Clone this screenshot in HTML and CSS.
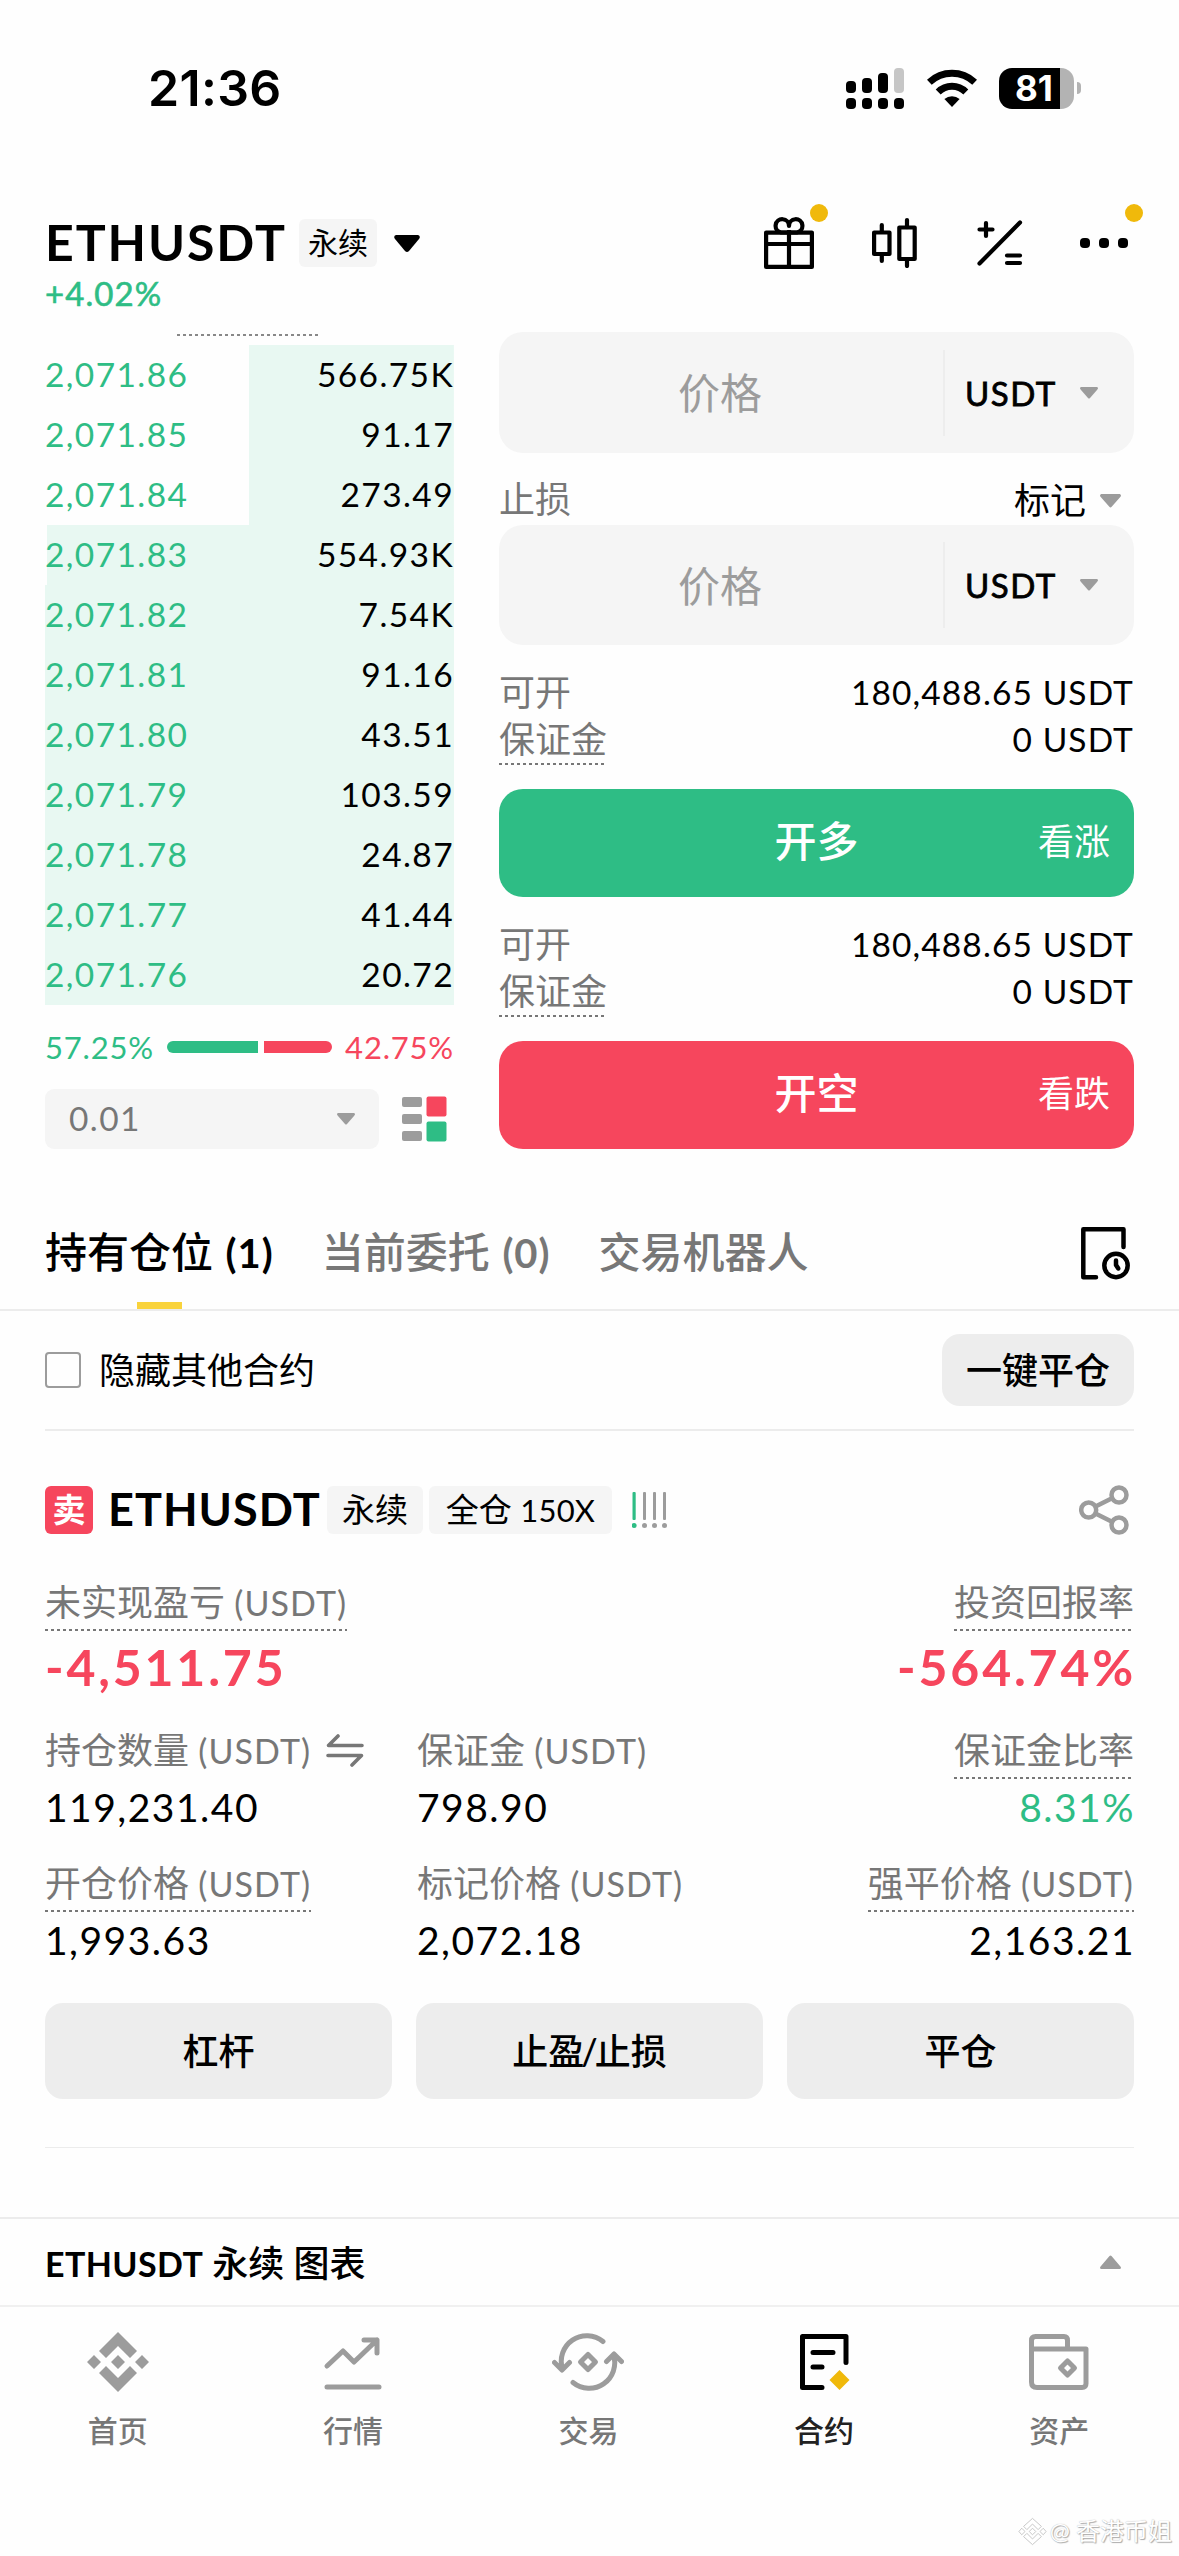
FILE: index.html
```html
<!DOCTYPE html>
<html lang="zh-CN">
<head>
<meta charset="utf-8">
<title>ETHUSDT 永续</title>
<link rel="stylesheet" href="styles.css">
</head>
<body>
<div class="status-bar">
  <span class="clock">21:36</span>
  <div class="status-icons">
    <svg class="signal" width="58" height="41" viewBox="0 0 58 41">
      <g fill="#000"><rect y="13" width="10" height="12" rx="4"/><rect x="16" y="10" width="10" height="15" rx="4"/><rect x="32" y="5" width="10" height="20" rx="4"/><rect y="30" width="10" height="11" rx="4"/><rect x="16" y="30" width="10" height="11" rx="4"/><rect x="32" y="30" width="10" height="11" rx="4"/><rect x="48" y="30" width="10" height="11" rx="4"/></g>
      <rect x="48" width="10" height="25" rx="4" fill="#c6c6c6"/>
    </svg>
    <svg class="wifi" width="50" height="38" viewBox="0 0 50 38">
      <path d="M25 38l-7.600-7.900a11.500 11.500 0 0 1 15.200 0z" fill="#000"/>
      <path d="M2.300 13.300a33 33 0 0 1 45.400 0M11.200 23a19.500 19.500 0 0 1 27.600 0" fill="none" stroke="#000" stroke-width="7"/>
    </svg>
    <div class="battery"><div class="battery-cell"><span>81</span></div><i class="battery-tip"></i></div>
  </div>
</div>

<header class="pair-header">
  <div class="pair-row">
    <h1>ETHUSDT</h1><span class="tag tag-sm">永续</span>
    <svg class="pair-caret" width="26" height="17" viewBox="0 0 26 17"><path d="M2 0H24Q27 1 25 4L15 16Q13 18 11 16L1 4Q-1 1 2 0z"/></svg>
    <div class="tools">
      <div class="tool tool-gift">
        <svg width="50" height="52" viewBox="0 0 50 52" fill="none" stroke="#000" stroke-width="4.200" stroke-linejoin="round"><rect x="2.100" y="15.600" width="45.800" height="34.300"/><path d="M2 27H48M25 13V50"/><path d="M25 15.500h-8a6.700 6.700 0 1 1 8-6.500a6.700 6.700 0 1 1 8 6.500h-8z"/></svg>
        <i class="dot"></i>
      </div>
      <svg class="tool-candle" width="45" height="50" viewBox="0 0 45 50" fill="none" stroke="#000" stroke-width="4.200" stroke-linecap="round" stroke-linejoin="round"><rect x="2.100" y="14.500" width="15.400" height="21.500"/><rect x="27.300" y="9.500" width="15.400" height="31.500"/><path d="M9.800 7v7M9.800 37v6M35 2.100v7M35 42v6"/></svg>
      <svg class="tool-calc" width="46" height="46" viewBox="0 0 46 46" fill="none" stroke="#000" stroke-width="4.200" stroke-linecap="round"><path d="M2.500 43.500L43 2.500M2.500 9.500H15.500M9 3V16M30 35.500H43M30 43H43"/></svg>
      <div class="tool tool-more">
        <svg width="48" height="10" viewBox="0 0 48 10"><rect width="10" height="10" rx="4"/><rect x="19" width="10" height="10" rx="4"/><rect x="38" width="10" height="10" rx="4"/></svg>
        <i class="dot"></i>
      </div>
    </div>
  </div>
  <div class="change">+4.02%</div>
</header>

<main>
<section class="trade">
  <div class="book">
    <div class="peek"></div>
    <div class="book-row" style="--depth:50.1%"><span>2,071.86</span><b>566.75K</b></div>
    <div class="book-row" style="--depth:50.1%"><span>2,071.85</span><b>91.17</b></div>
    <div class="book-row" style="--depth:50.1%"><span>2,071.84</span><b>273.49</b></div>
    <div class="book-row" style="--depth:99.5%"><span>2,071.83</span><b>554.93K</b></div>
    <div class="book-row" style="--depth:100%"><span>2,071.82</span><b>7.54K</b></div>
    <div class="book-row" style="--depth:100%"><span>2,071.81</span><b>91.16</b></div>
    <div class="book-row" style="--depth:100%"><span>2,071.80</span><b>43.51</b></div>
    <div class="book-row" style="--depth:100%"><span>2,071.79</span><b>103.59</b></div>
    <div class="book-row" style="--depth:100%"><span>2,071.78</span><b>24.87</b></div>
    <div class="book-row" style="--depth:100%"><span>2,071.77</span><b>41.44</b></div>
    <div class="book-row" style="--depth:100%"><span>2,071.76</span><b>20.72</b></div>
    <div class="ratio">
      <span class="up">57.25%</span>
      <i class="ratio-buy" style="flex-grow:57.25"></i><i class="ratio-sell" style="flex-grow:42.75"></i>
      <span class="down">42.75%</span>
    </div>
    <div class="book-foot">
      <div class="precision"><span>0.01</span><svg width="18" height="12" viewBox="0 0 18 12"><path class="caret" d="M1 0H17Q19 1 17 3L10 11Q9 12 8 11L1 3Q-1 1 1 0z"/></svg></div>
      <svg class="layout-icon" width="45" height="46" viewBox="0 0 45 46"><g fill="#9c9c9c"><rect y="1" width="20" height="10" rx="2"/><rect y="18" width="20" height="10" rx="2"/><rect y="35" width="20" height="10" rx="2"/></g><rect x="24.500" y=".5" width="20" height="20" rx="2" fill="#f6465d"/><rect x="24.500" y="25.500" width="20" height="20" rx="2" fill="#2ebd85"/></svg>
    </div>
  </div>

  <div class="order">
    <div class="field"><span class="placeholder">价格</span><div class="unit"><span>USDT</span><svg width="18" height="12" viewBox="0 0 18 12"><path class="caret" d="M1 0H17Q19 1 17 3L10 11Q9 12 8 11L1 3Q-1 1 1 0z"/></svg></div></div>
    <div class="stop-row"><span class="muted">止损</span><span class="trigger">标记<svg width="21" height="14" viewBox="0 0 18 12"><path class="caret" d="M1 0H17Q19 1 17 3L10 11Q9 12 8 11L1 3Q-1 1 1 0z"/></svg></span></div>
    <div class="field field-2"><span class="placeholder">价格</span><div class="unit"><span>USDT</span><svg width="18" height="12" viewBox="0 0 18 12"><path class="caret" d="M1 0H17Q19 1 17 3L10 11Q9 12 8 11L1 3Q-1 1 1 0z"/></svg></div></div>
    <div class="info info-a"><span class="muted">可开</span><span class="num">180,488.65 USDT</span></div>
    <div class="info info-b"><span class="muted dotted">保证金</span><span class="num">0 USDT</span></div>
    <button class="submit buy"><span>开多</span><em>看涨</em></button>
    <div class="info info-a"><span class="muted">可开</span><span class="num">180,488.65 USDT</span></div>
    <div class="info info-b"><span class="muted dotted">保证金</span><span class="num">0 USDT</span></div>
    <button class="submit sell"><span>开空</span><em>看跌</em></button>
  </div>
</section>

<nav class="tabs">
  <span class="tab active">持有仓位 <span class="latin">(1)</span></span>
  <span class="tab">当前委托 <span class="latin">(0)</span></span>
  <span class="tab">交易机器人</span>
  <svg class="history" width="50" height="53" viewBox="0 0 50 53" fill="none" stroke="#000" stroke-width="4.500" stroke-linecap="round" stroke-linejoin="round"><path d="M42.500 20V2.300H2.300V50.200H15"/><circle cx="35" cy="38.500" r="11.700"/><path d="M35 33.500v4.500l2.300 3.500"/></svg>
</nav>

<section class="filter">
  <i class="checkbox"></i><span class="filter-label">隐藏其他合约</span>
  <button class="close-all">一键平仓</button>
</section>

<section class="position">
  <div class="position-head">
    <span class="side">卖</span><h2>ETHUSDT</h2><span class="tag tag-type">永续</span><span class="tag tag-lev">全仓 <span class="latin">150X</span></span>
    <svg class="adl" width="36" height="37" viewBox="0 0 36 37"><g fill="#9c9c9c"><rect x="11" width="3" height="28" rx="1"/><rect x="21" width="3" height="28" rx="1"/><rect x="31" width="3" height="28" rx="1"/><circle cx="12.500" cy="33.500" r="2.500"/><circle cx="22.500" cy="33.500" r="2.500"/><circle cx="32.500" cy="33.500" r="2.500"/></g><g fill="#2ebd85"><rect x=".5" width="3.200" height="28" rx="1"/><circle cx="2.100" cy="33.500" r="2.500"/></g></svg>
    <svg class="share" width="50" height="50" viewBox="0 0 50 50" fill="none" stroke="#9c9c9c" stroke-width="4.500"><circle cx="9.700" cy="25" r="7.500"/><circle cx="40" cy="10" r="7.500"/><circle cx="40" cy="40" r="7.500"/><path d="M16.500 21.500L33 13.300M16.500 28.500L33 36.700"/></svg>
  </div>
  <div class="pnl">
    <div class="cell"><span class="label dotted">未实现盈亏 <span class="latin">(USDT)</span></span><strong>-4,511.75</strong></div>
    <div class="cell end"><span class="label dotted">投资回报率</span><strong>-564.74%</strong></div>
  </div>
  <div class="stats">
    <div class="cell"><span class="label">持仓数量 <span class="latin">(USDT)</span><svg class="swap" width="38" height="33" viewBox="0 0 38 33" fill="none" stroke="#777" stroke-width="3.600" stroke-linecap="round" stroke-linejoin="round"><path d="M36 11.500H2.500L12 2M2 21.500H35.500L26 31"/></svg></span><span class="value">119,231.40</span></div>
    <div class="cell"><span class="label">保证金 <span class="latin">(USDT)</span></span><span class="value">798.90</span></div>
    <div class="cell end"><span class="label dotted">保证金比率</span><span class="value up">8.31%</span></div>
  </div>
  <div class="stats">
    <div class="cell"><span class="label dotted">开仓价格 <span class="latin">(USDT)</span></span><span class="value">1,993.63</span></div>
    <div class="cell"><span class="label">标记价格 <span class="latin">(USDT)</span></span><span class="value">2,072.18</span></div>
    <div class="cell end"><span class="label dotted">强平价格 <span class="latin">(USDT)</span></span><span class="value">2,163.21</span></div>
  </div>
  <div class="actions"><button>杠杆</button><button>止盈<span class="slash">/</span>止损</button><button>平仓</button></div>
</section>
</main>

<div class="chart-bar"><span><span class="latin">ETHUSDT</span> 永续 图表</span><svg width="21" height="14" viewBox="0 0 21 14"><path class="caret" d="M1 14H20Q22 13 20 11L11.500 1Q10.500 0 9.500 1L1 11Q-1 13 1 14z"/></svg></div>

<footer class="bottom-nav">
  <a><svg width="62" height="60" viewBox="0 0 62 60" fill="#9c9c9c"><path d="M31 0L50 19L43 26L31 14L19 26L12 19zM31 60L50 41L43 34L31 46L19 34L12 41zM31 23L38 30L31 37L24 30zM7 23L14 30L7 37L0 30zM55 23L62 30L55 37L48 30z"/></svg>首页</a>
  <a><svg width="62" height="60" viewBox="0 0 62 60" fill="none" stroke="#9c9c9c" stroke-width="5" stroke-linecap="round" stroke-linejoin="round"><path d="M5 34L21 19L32 30L55 8M42 8H55V21M5 55H57"/></svg>行情</a>
  <a><svg width="72" height="60" viewBox="0 0 72 60" fill="none" stroke="#9c9c9c" stroke-width="5" stroke-linecap="round" stroke-linejoin="round"><path d="M51 9.500A25.500 25.500 0 0 0 10.500 37M2.500 30.500L10 38L17.500 30.500M21 50.500A25.500 25.500 0 0 0 61.500 23M54.500 29.500L62 22L69.500 29.500"/><path d="M36 22.500L43.500 30L36 37.500L28.500 30z"/></svg>交易</a>
  <a class="active"><svg width="62" height="60" viewBox="0 0 62 60" fill="none" stroke="#000" stroke-width="5" stroke-linecap="round" stroke-linejoin="round"><path d="M53 30.500V4.500H9.500V55.500H29M20 20.500H40M20 35H29"/><path d="M46.500 38L56.500 48L46.500 58L36.500 48z" fill="#f0b90b" stroke="none"/></svg>合约</a>
  <a><svg width="62" height="60" viewBox="0 0 62 60" fill="none" stroke="#9c9c9c" stroke-width="5" stroke-linejoin="round"><path d="M3.500 17V8.500Q3.500 4.500 7.500 4.500H36Q39.500 4.500 39.500 8.500V17M3.500 17H58V51.500Q58 55.500 54 55.500H9Q3.500 55.500 3.500 50z"/><path d="M39.500 29L46.500 36L39.500 43L32.500 36z"/></svg>资产</a>
</footer>

<div class="watermark"><svg width="29" height="29" viewBox="0 0 62 60" fill="#fff" stroke="#c4c4c4" stroke-width="2"><path d="M31 2L50 19L43 26L31 14L19 26L12 19zM31 58L50 41L43 34L31 46L19 34L12 41zM31 23L38 30L31 37L24 30zM8 23L15 30L8 37L2 30zM54 23L60 30L54 37L47 30z"/></svg>@ 香港币姐</div>
</body>
</html>
```
FILE: styles.css
```css
* { box-sizing: border-box; }

body {
  margin: 0;
  position: relative;
  width: 1179px;
  height: 2556px;
  overflow: hidden;
  background: #fefefe;
  color: #000;
  font-family: Lato, "Noto Sans CJK SC", sans-serif;
  font-size: 36px;
}

svg { display: block; flex: none; }
h1, h2 { margin: 0; }
button { border: 0; padding: 0; margin: 0; font: inherit; color: inherit; }
em, i, b { font-style: normal; font-weight: 400; }
.caret { fill: #9c9c9c; }
.muted { color: #777; }
.up { color: #2ebd85; }
.down { color: #f6465d; }
.latin { font-size: 34px; letter-spacing: 1.1px; }

.dotted {
  background: repeating-linear-gradient(90deg, #777 0 3px, transparent 3px 6px) left bottom / 100% 2px no-repeat;
}

/* status bar */
.status-bar {
  height: 176px;
  padding: 0 98px 0 148px;
  display: flex;
  align-items: center;
  justify-content: space-between;
}
.clock { font: 600 50px/60px Inter, sans-serif; letter-spacing: .3px; }
.status-icons { display: flex; align-items: center; }
.wifi { margin-left: 23px; }
.battery { display: flex; align-items: center; margin-left: 22px; gap: 3px; }
.battery-cell {
  width: 75px;
  height: 41px;
  border-radius: 13px;
  background: linear-gradient(90deg, #000 61px, #b3b3b3 61px);
  color: #fff;
  font: 700 35px/41px Inter, sans-serif;
  padding-left: 16px;
}
.battery-tip { width: 4px; height: 12px; background: #b3b3b3; border-radius: 0 4px 4px 0; }

/* pair header */
.pair-header { padding: 43px 45px 0; }
.pair-row { display: flex; align-items: center; height: 48px; }
.pair-row h1 { font-size: 50px; height: 48px; line-height: 46px; font-weight: 700; width: 254px; letter-spacing: 1.9px; }
.tag { background: #f5f5f5; border-radius: 6px; height: 48px; line-height: 46px; text-align: center; }
.tag-sm { width: 78px; font-size: 30px; }
.pair-caret { margin-left: 17px; }
.tools { display: flex; align-items: center; margin-left: auto; padding-right: 6px; }
.tool { position: relative; }
.tool-candle { margin-left: 58px; }
.tool-calc { margin-left: 60px; }
.tool-more { margin-left: 57px; }
.dot { position: absolute; width: 18px; height: 18px; border-radius: 50%; background: #f0b90b; }
.tool-gift .dot { left: 46px; top: -13px; }
.tool-more .dot { left: 45px; top: -34px; }
.change { margin-top: 6px; height: 42px; line-height: 40px; font-size: 33px; color: #2ebd85; letter-spacing: 1.1px; -webkit-text-stroke: .6px #2ebd85; }

/* order book */
.trade { display: grid; grid-template-columns: 409px 635px; column-gap: 45px; margin: 17px 45px 0; }
.peek { margin: 2px 0 9px 132px; width: 142px; height: 2px; background: repeating-linear-gradient(90deg, #888 0 3px, transparent 3px 6px); }
.book-row {
  display: flex;
  justify-content: space-between;
  height: 60px;
  line-height: 58px;
  font-size: 33.500px;
  letter-spacing: 1.4px;
  color: #2ebd85;
  background: linear-gradient(#e8f8f2, #e8f8f2) right / var(--depth) 100% no-repeat;
}
.book-row b { color: #000; }
.ratio { display: flex; align-items: center; height: 84px; font-size: 31px; letter-spacing: .8px; }
.ratio i { height: 12px; flex-basis: 0; }
.ratio-buy { background: #2ebd85; border-radius: 6px 0 0 6px; margin-left: 13px; margin-right: 6px; }
.ratio-sell { background: #f6465d; border-radius: 0 6px 6px 0; margin-right: 13px; }
.book-foot { display: flex; align-items: center; gap: 23px; }
.precision {
  width: 334px;
  height: 60px;
  padding: 0 24px;
  border-radius: 9px;
  background: #f5f5f5;
  display: flex;
  align-items: center;
  justify-content: space-between;
  color: #777;
  font-size: 33.500px;
  line-height: 58px;
  letter-spacing: 1.4px;
}
.precision span { height: 60px; }

/* order form */
.order { display: flex; flex-direction: column; }
.field { height: 121px; border-radius: 24px; background: #f5f5f5; display: flex; align-items: center; }
.field-2 { height: 120px; }
.placeholder { flex: 1; padding: 0 2px 4px 0; text-align: center; color: #9c9c9c; font-size: 42px; }
.unit {
  width: 191px;
  height: 86px;
  border-left: 2px solid #ededed;
  padding: 0 36px 0 20px;
  display: flex;
  align-items: center;
  justify-content: space-between;
  font-size: 33px;
  -webkit-text-stroke: .8px #000;
  letter-spacing: 1.5px;
}
.unit svg { -webkit-text-stroke: 0; }
.stop-row { display: flex; justify-content: space-between; margin-top: 23px; height: 49px; line-height: 47px; padding-right: 13px; }
.trigger { display: flex; align-items: center; gap: 14px; }
.info { display: flex; justify-content: space-between; }
.info-a { margin-top: 24px; height: 48px; line-height: 46px; }
.info-b { height: 48px; line-height: 45px; margin-bottom: 24px; }
.num { font-size: 33.500px; letter-spacing: 1.1px; }
.submit { position: relative; height: 108px; border-radius: 24px; color: #fff; font-size: 42px; font-weight: 500; line-height: 104px; }
.submit span { display: block; height: 108px; }
.submit em { position: absolute; right: 24px; top: 0; font-size: 36px; font-weight: 400; }
.buy { background: #2ebd85; }
.sell { background: #f6465d; }

/* tabs */
.tabs {
  position: relative;
  display: flex;
  align-items: center;
  gap: 48px;
  margin-top: 48px;
  padding: 0 45px;
  height: 114px;
  border-bottom: 2px solid #ececec;
  font-size: 42px;
  font-weight: 500;
  color: #777;
}
.tab { position: relative; height: 112px; line-height: 111px; }
.tab .latin { font-size: 40px; font-weight: 700; letter-spacing: 1px; margin-left: 2px; }
.tab.active { color: #000; }
.tab.active::after { content: ""; position: absolute; left: 50%; bottom: 0; width: 45px; height: 7px; margin-left: -22px; background: #f9d33c; }
.history { margin-left: auto; margin-right: 3px; }

/* filter row */
.filter { display: flex; align-items: center; height: 120px; margin: 0 45px; border-bottom: 2px solid #ececec; }
.checkbox { width: 36px; height: 36px; margin-bottom: 1px; border: 2px solid #9c9c9c; border-radius: 4px; }
.filter-label { margin-left: 18px; padding-bottom: 4px; }
.close-all { margin-left: auto; width: 192px; height: 72px; padding-bottom: 4px; border-radius: 18px; background: #ededed; font-weight: 500; }

/* position card */
.position { margin: 0 45px; padding-top: 55px; border-bottom: 1px solid #ececec; height: 717px; }
.position-head { display: flex; align-items: center; height: 48px; line-height: 47px; }
.side { width: 48px; height: 48px; border-radius: 6px; background: #f6465d; color: #fff; font-size: 33px; font-weight: 700; text-align: center; }
.position-head h2 { margin-left: 15px; width: 219px; height: 48px; font-size: 45px; letter-spacing: 1px; }
.position-head .tag { font-size: 33px; }
.tag-type { width: 96px; }
.tag-lev { margin-left: 6px; width: 183px; }
.tag .latin { font-size: 31px; letter-spacing: .2px; }
.adl { margin-left: 20px; }
.share { margin-left: auto; margin-right: 5px; }
.cell { display: flex; flex-direction: column; align-items: flex-start; }
.cell.end { align-items: flex-end; }
.label { display: flex; align-items: center; white-space: pre; height: 56px; line-height: 53px; padding-bottom: 2px; color: #777; }
.swap { margin-left: 15px; }
.pnl { display: flex; justify-content: space-between; margin-top: 41px; }
.pnl strong { margin-top: 8px; height: 56px; line-height: 56px; font-size: 50px; letter-spacing: 2.8px; color: #f6465d; }
.pnl .end strong { margin-right: -2px; }
.stats { display: grid; grid-template-columns: 372px 1fr auto; margin-top: 28px; }
.stats + .stats { margin-top: 23px; }
.value { margin-top: 4px; height: 50px; line-height: 48px; font-size: 39px; letter-spacing: 1.5px; }
.end .value { margin-right: -1px; }
.actions { display: grid; grid-template-columns: repeat(3, 1fr); gap: 24px; margin-top: 37px; }
.actions button { height: 96px; padding-bottom: 4px; border-radius: 18px; background: #ededed; font-weight: 500; }
.slash { margin: 0 -3px; }

/* chart drawer */
.chart-bar {
  display: flex;
  align-items: center;
  justify-content: space-between;
  height: 90px;
  margin-top: 69px;
  padding: 0 58px 0 45px;
  border-top: 2px solid #ececec;
  border-bottom: 2px solid #f0f0f0;
  font-weight: 500;
}
.chart-bar > span { padding-bottom: 3px; }
.chart-bar .latin { font-weight: 700; letter-spacing: .4px; }

/* bottom navigation */
.bottom-nav { display: grid; grid-template-columns: repeat(5, 1fr); padding: 25px 2px 0 0; }
.bottom-nav a { display: flex; flex-direction: column; align-items: center; gap: 16px; font-size: 30px; line-height: 44px; color: #777; font-weight: 500; }
.bottom-nav .active { color: #222; }

.watermark {
  position: absolute;
  right: 7px;
  bottom: 9px;
  display: flex;
  align-items: center;
  gap: 3px;
  font-size: 24px;
  line-height: 32px;
  color: #fff;
  text-shadow: 1px 1px 1px #aaa, 0 0 1px #aaa;
}
```
